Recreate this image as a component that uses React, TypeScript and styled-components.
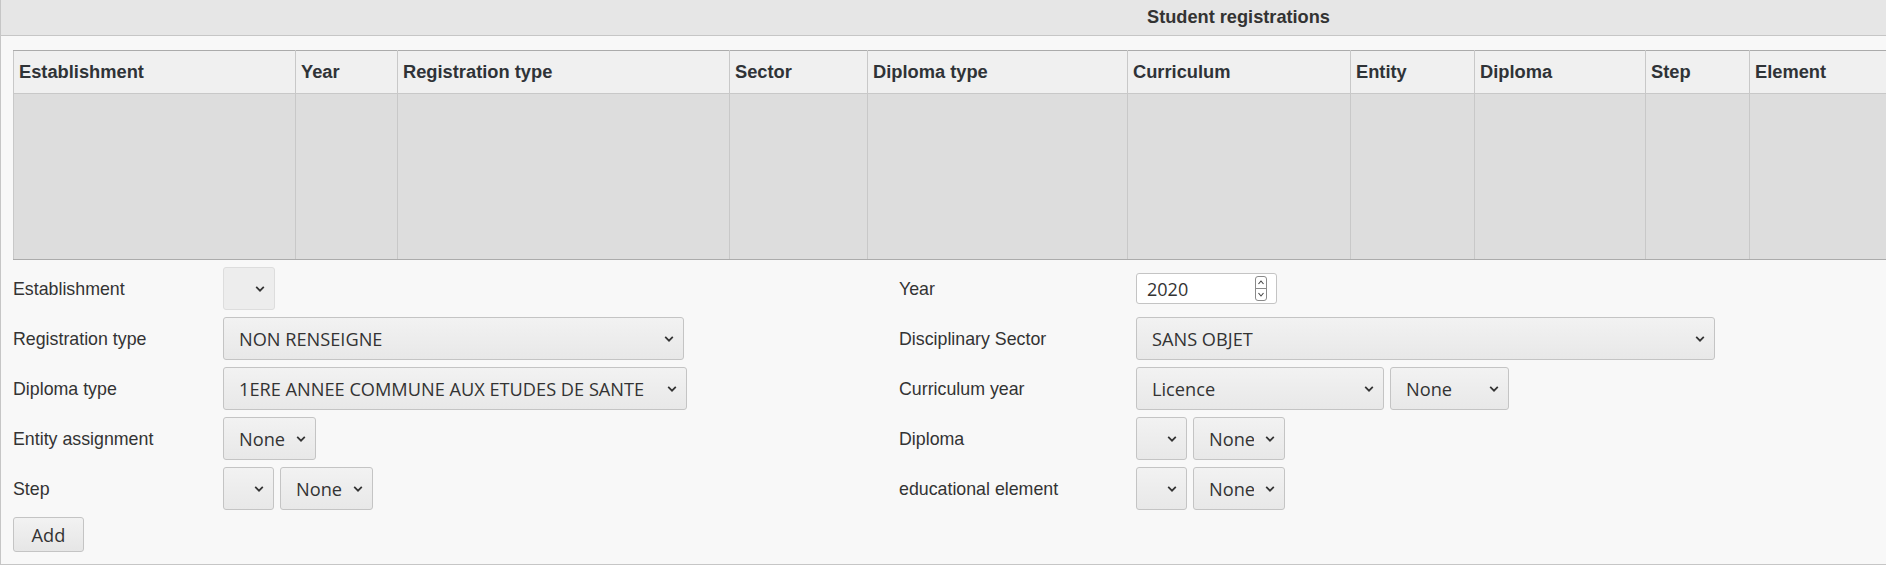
import React from "react";
import styled, { createGlobalStyle } from "styled-components";

const GlobalStyle = createGlobalStyle`
  html, body {
    margin: 0;
    padding: 0;
    background: #ffffff;
    overflow: hidden;
  }
  body {
    font-family: "Liberation Sans", Arial, sans-serif;
    color: #333;
  }
`;

const Viewport = styled.div`
  width: 1886px;
  overflow: hidden;
`;

const Panel = styled.section`
  width: 2476px;
  box-sizing: border-box;
  border-left: 1px solid #c6c6c6;
  border-bottom: 1px solid #c6c6c6;
  background: #f8f8f8;
`;

const PanelHeader = styled.header`
  height: 35px;
  background: #e6e6e6;
  border-bottom: 1px solid #c6c6c6;
  display: flex;
  align-items: center;
  justify-content: center;
  font-family: "Liberation Sans", Arial, sans-serif;
  font-weight: bold;
  font-size: 18.2px;
  color: #333;
`;

const PanelBody = styled.div`
  padding: 14px 12px 12px 12px;
`;

const Table = styled.table`
  width: 100%;
  table-layout: fixed;
  border-collapse: collapse;
  border: 1px solid #ababab;
`;

const HeadCell = styled.th`
  height: 42px;
  padding: 0 5px;
  text-align: left;
  vertical-align: middle;
  background: #f0f0f0;
  border: 1px solid #c8c8c8;
  border-top-color: #ababab;
  font-family: "Liberation Sans", Arial, sans-serif;
  font-weight: bold;
  font-size: 18.3px;
  color: #2f3337;
  white-space: nowrap;
  overflow: hidden;
`;

const BodyCell = styled.td`
  height: 165px;
  padding: 0;
  background: #dddddd;
  border: 1px solid #c8c8c8;
  border-bottom-color: #ababab;
`;

const Form = styled.div`
  margin-top: 7px;
  display: grid;
  grid-template-columns: 210px 676px 237px 1fr;
  grid-auto-rows: 43px;
  row-gap: 7px;
  align-items: center;
`;

const Label = styled.label`
  padding-top: 2px;
  font-family: "Liberation Sans", Arial, sans-serif;
  font-size: 17.8px;
  color: #333;
`;

const Controls = styled.div`
  display: flex;
  gap: 6px;
  align-items: center;
  height: 43px;
`;

const SelectWrap = styled.span<{ $w: number }>`
  position: relative;
  display: inline-flex;
  width: ${(p) => p.$w}px;
  height: 43px;
  flex: none;
`;

const NativeSelect = styled.select<{ $muted?: boolean }>`
  appearance: none;
  -webkit-appearance: none;
  width: 100%;
  height: 100%;
  box-sizing: border-box;
  margin: 0;
  padding: 1px 30px 0 15px;
  font-family: "Open Sans", "Liberation Sans", sans-serif;
  font-size: 18.2px;
  color: #333;
  background: ${(p) =>
    p.$muted ? "#ededed" : "linear-gradient(#f2f2f2, #e8e8e8)"};
  border: 1px solid ${(p) => (p.$muted ? "#dddddd" : "#c4c4c4")};
  border-radius: 3px;
  outline: none;
`;

const Chevron = styled.svg`
  position: absolute;
  right: 10px;
  top: 50%;
  transform: translateY(-50%);
  pointer-events: none;
`;

const NumberWrap = styled.span`
  position: relative;
  display: inline-flex;
  width: 141px;
  height: 31px;
`;

const NumberInput = styled.input`
  width: 100%;
  height: 100%;
  box-sizing: border-box;
  margin: 0;
  padding: 1px 28px 0 10px;
  font-family: "Open Sans", "Liberation Sans", sans-serif;
  font-size: 18px;
  color: #333;
  background: #ffffff;
  border: 1px solid #c4c4c4;
  border-radius: 3px;
  outline: none;
`;

const Spinner = styled.svg`
  position: absolute;
  right: 10px;
  top: 3px;
  pointer-events: none;
`;

const AddButton = styled.button`
  margin-top: 7px;
  width: 71px;
  height: 35px;
  padding: 1px 0 0 0;
  font-family: "Open Sans", "Liberation Sans", sans-serif;
  font-size: 18.2px;
  color: #333;
  background: linear-gradient(#f2f2f2, #e6e6e6);
  border: 1px solid #c4c4c4;
  border-radius: 3px;
  cursor: pointer;
`;

type SelectProps = { w: number; value?: string; muted?: boolean };

const Select: React.FC<SelectProps> = ({ w, value = "", muted }) => (
  <SelectWrap $w={w}>
    <NativeSelect $muted={muted} defaultValue={value}>
      <option value={value}>{value}</option>
    </NativeSelect>
    <Chevron width="10" height="7" viewBox="0 0 10 7">
      <path d="M1.2 1.3 L5 5.2 L8.8 1.3" fill="none" stroke="#333" strokeWidth="1.7" />
    </Chevron>
  </SelectWrap>
);

const YearInput: React.FC = () => (
  <NumberWrap>
    <NumberInput type="text" defaultValue="2020" />
    <Spinner width="12" height="25" viewBox="0 0 12 25">
      <rect x="0.5" y="0.5" width="11" height="24" rx="2.5" fill="#fff" stroke="#8a8a8a" />
      <line x1="0.5" y1="12.5" x2="11.5" y2="12.5" stroke="#8a8a8a" />
      <path d="M3.5 8 L6 5 L8.5 8" fill="none" stroke="#444" strokeWidth="1.1" />
      <path d="M3.5 17 L6 20 L8.5 17" fill="none" stroke="#444" strokeWidth="1.1" />
    </Spinner>
  </NumberWrap>
);

const columns: { title: string; width?: number }[] = [
  { title: "Establishment", width: 282 },
  { title: "Year", width: 102 },
  { title: "Registration type", width: 332 },
  { title: "Sector", width: 138 },
  { title: "Diploma type", width: 260 },
  { title: "Curriculum", width: 223 },
  { title: "Entity", width: 124 },
  { title: "Diploma", width: 171 },
  { title: "Step", width: 104 },
  { title: "Element" },
];

export default function App() {
  return (
    <>
      <GlobalStyle />
      <Viewport>
        <Panel>
          <PanelHeader>Student registrations</PanelHeader>
          <PanelBody>
            <Table>
              <colgroup>
                {columns.map((c) => (
                  <col key={c.title} style={c.width ? { width: c.width } : undefined} />
                ))}
              </colgroup>
              <thead>
                <tr>
                  {columns.map((c) => (
                    <HeadCell key={c.title}>{c.title}</HeadCell>
                  ))}
                </tr>
              </thead>
              <tbody>
                <tr>
                  {columns.map((c) => (
                    <BodyCell key={c.title} />
                  ))}
                </tr>
              </tbody>
            </Table>

            <Form>
              <Label>Establishment</Label>
              <Controls>
                <Select w={52} muted />
              </Controls>
              <Label>Year</Label>
              <Controls>
                <YearInput />
              </Controls>

              <Label>Registration type</Label>
              <Controls>
                <Select w={461} value="NON RENSEIGNE" />
              </Controls>
              <Label>Disciplinary Sector</Label>
              <Controls>
                <Select w={579} value="SANS OBJET" />
              </Controls>

              <Label>Diploma type</Label>
              <Controls>
                <Select w={464} value="1ERE ANNEE COMMUNE AUX ETUDES DE SANTE" />
              </Controls>
              <Label>Curriculum year</Label>
              <Controls>
                <Select w={248} value="Licence" />
                <Select w={119} value="None" />
              </Controls>

              <Label>Entity assignment</Label>
              <Controls>
                <Select w={93} value="None" />
              </Controls>
              <Label>Diploma</Label>
              <Controls>
                <Select w={51} />
                <Select w={92} value="None" />
              </Controls>

              <Label>Step</Label>
              <Controls>
                <Select w={51} />
                <Select w={93} value="None" />
              </Controls>
              <Label>educational element</Label>
              <Controls>
                <Select w={51} />
                <Select w={92} value="None" />
              </Controls>
            </Form>

            <AddButton type="button">Add</AddButton>
          </PanelBody>
        </Panel>
      </Viewport>
    </>
  );
}
